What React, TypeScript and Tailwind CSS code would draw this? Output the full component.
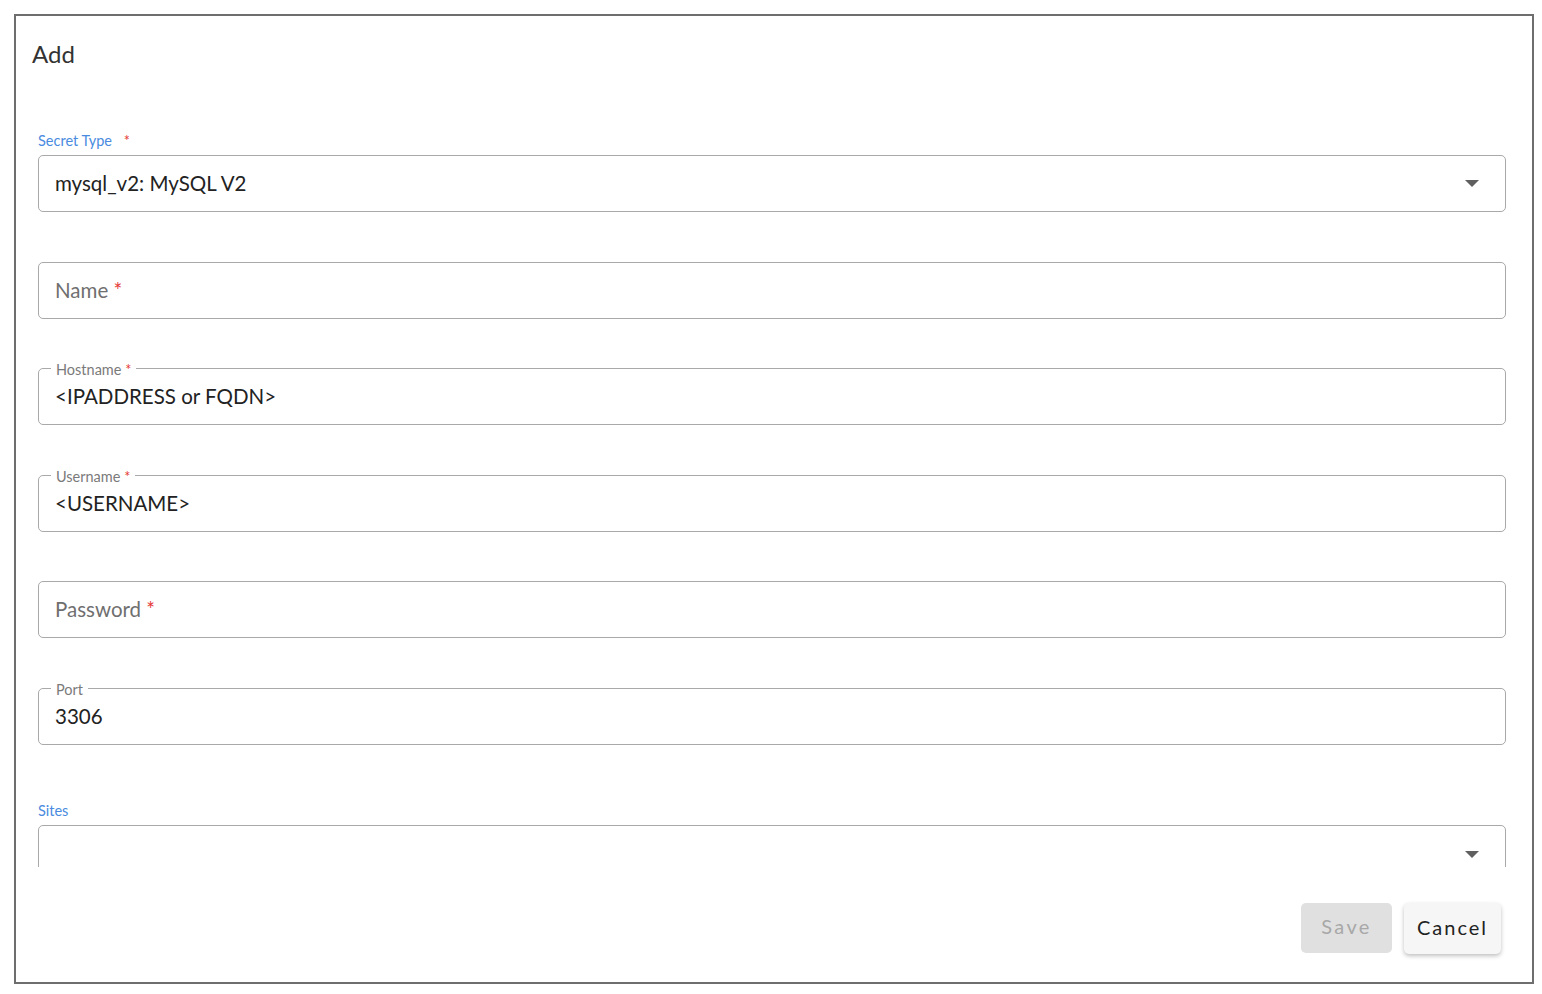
const font = { fontFamily: 'Lato, "Noto Sans", sans-serif' };

function Req() {
  return <span className="text-[#e53935]">*</span>;
}

function Arrow() {
  return (
    <svg width="14" height="8" viewBox="0 0 14 8" className="shrink-0">
      <path d="M0 0 L14 0 L7 7 Z" fill="#5f5f5f" />
    </svg>
  );
}

function OutlinedField({ label, value, required }: { label: string; value: string; required?: boolean }) {
  return (
    <div className="relative h-[57px] rounded-[5px] border border-[#a9a9a9] flex items-center pl-4">
      <span className="absolute -top-[7px] left-[12px] bg-white px-[5px] text-[14.5px] leading-[16px] text-[#7a7a7a]">
        {label} {required && <Req />}
      </span>
      <span className="text-[20.5px] text-[#222]">{value}</span>
    </div>
  );
}

function EmptyField({ placeholder }: { placeholder: string }) {
  return (
    <div className="h-[57px] rounded-[5px] border border-[#a9a9a9] flex items-center pl-4">
      <span className="text-[20.5px] text-[#6f6f6f]">
        {placeholder} <Req />
      </span>
    </div>
  );
}

export default function App() {
  return (
    <div className="w-[1542px] h-[994px] bg-white pt-[14px] pl-[14px]" style={font}>
      <div className="w-[1520px] h-[970px] border-2 border-[#6e6e6e] flex flex-col">
        <h1 className="pl-4 pt-[22px] text-[24px] leading-[32px] text-[#333] font-normal">Add</h1>

        <div className="flex-1 overflow-hidden pl-[22px] pr-[26px] pt-[62px]">
          <div className="text-[14.5px] leading-[18px] text-[#4a8be0]">
            Secret Type <span className="ml-2 text-[#e53935]">*</span>
          </div>
          <div className="mt-[5px] h-[57px] rounded-[5px] border border-[#a9a9a9] flex items-center justify-between pl-4 pr-[26px]">
            <span className="text-[20.5px] text-[#222]">mysql_v2: MySQL V2</span>
            <Arrow />
          </div>

          <div className="mt-[50px]">
            <EmptyField placeholder="Name" />
          </div>
          <div className="mt-[49px]">
            <OutlinedField label="Hostname" value="<IPADDRESS or FQDN>" required />
          </div>
          <div className="mt-[50px]">
            <OutlinedField label="Username" value="<USERNAME>" required />
          </div>
          <div className="mt-[49px]">
            <EmptyField placeholder="Password" />
          </div>
          <div className="mt-[50px]">
            <OutlinedField label="Port" value="3306" />
          </div>

          <div className="mt-[57px] text-[14.5px] leading-[18px] text-[#4a8be0]">Sites</div>
          <div className="mt-[5px] h-[57px] rounded-[5px] border border-[#a9a9a9] flex items-end justify-end pb-[22px] pr-[26px]">
            <Arrow />
          </div>
        </div>

        <div className="h-[115px] flex justify-end items-start gap-3 pt-[36px] pr-[31px]">
          <button className="h-[50px] w-[91px] rounded-[5px] bg-[#e0e0e0] pb-[4px] text-[20px] tracking-[0.12em] text-[#a8a8a8]">
            Save
          </button>
          <button className="h-[51px] w-[97px] rounded-[5px] bg-[#f6f6f6] pb-[4px] text-[20px] tracking-[0.1em] text-[#222] shadow-[0_2px_4px_rgba(0,0,0,0.25)]">
            Cancel
          </button>
        </div>
      </div>
    </div>
  );
}
